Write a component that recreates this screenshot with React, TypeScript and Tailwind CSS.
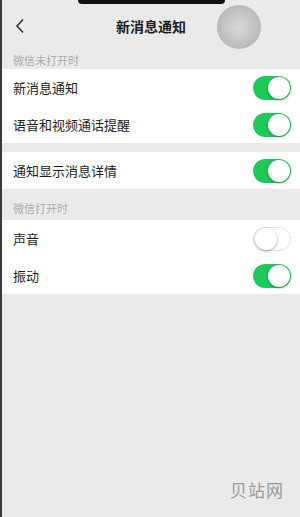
import React from "react";

const font = { fontFamily: '"Noto Sans CJK SC", "Noto Sans", sans-serif' };

function Toggle({ on }: { on: boolean }) {
  return (
    <div
      className={
        "flex h-[24px] w-[38px] items-center rounded-full p-[1px] " +
        (on ? "justify-end bg-[#1ec95a]" : "justify-start border border-[#e2e2e2] bg-white p-0")
      }
    >
      <div className="h-[22px] w-[22px] rounded-full bg-white shadow-[0_1px_3px_rgba(0,0,0,0.35)]" />
    </div>
  );
}

function Row({ label, on }: { label: string; on: boolean }) {
  return (
    <div className="flex h-[37px] items-center justify-between bg-white pl-[11px] pr-[9px]">
      <span className="text-[13px] text-[#1c1c1c]">{label}</span>
      <Toggle on={on} />
    </div>
  );
}

export default function App() {
  return (
    <div
      className="relative h-[517px] w-[300px] overflow-hidden border-l-2 border-[#3a3a3a] bg-[#ebeaeb]"
      style={font}
    >
      {/* notch */}
      <div className="absolute left-[76px] top-0 h-[4px] w-[147px] rounded-b-[6px] bg-[#111]" />
      {/* floating assistive circle */}
      <div className="absolute left-[215px] top-[5px] h-[44px] w-[44px] rounded-full bg-[radial-gradient(circle,#d8d8d8_0%,#c6c6c6_45%,#a9a9a9_100%)]" />

      <div className="flex h-[52px] items-center px-[13px]">
        <svg width="10" height="16" viewBox="0 0 10 16" fill="none">
          <path d="M8 1.5L2 8l6 6.5" stroke="#333" strokeWidth="1.6" />
        </svg>
        <div className="flex-1 pr-[10px] text-center text-[14px] font-bold text-[#1c1c1c]">新消息通知</div>
      </div>

      <div className="flex h-[17px] items-center pl-[11px] text-[11px] text-[#aaa]">微信未打开时</div>
      <Row label="新消息通知" on />
      <Row label="语音和视频通话提醒" on />
      <div className="h-[9px]" />
      <Row label="通知显示消息详情" on />
      <div className="flex h-[31px] items-center pl-[11px] pt-[7px] text-[11px] text-[#aaa]">微信打开时</div>
      <Row label="声音" on={false} />
      <Row label="振动" on />

      <div className="absolute bottom-[15px] right-[16px] text-[17px] tracking-[1px] text-[#9a9a9a]">贝站网</div>
    </div>
  );
}
